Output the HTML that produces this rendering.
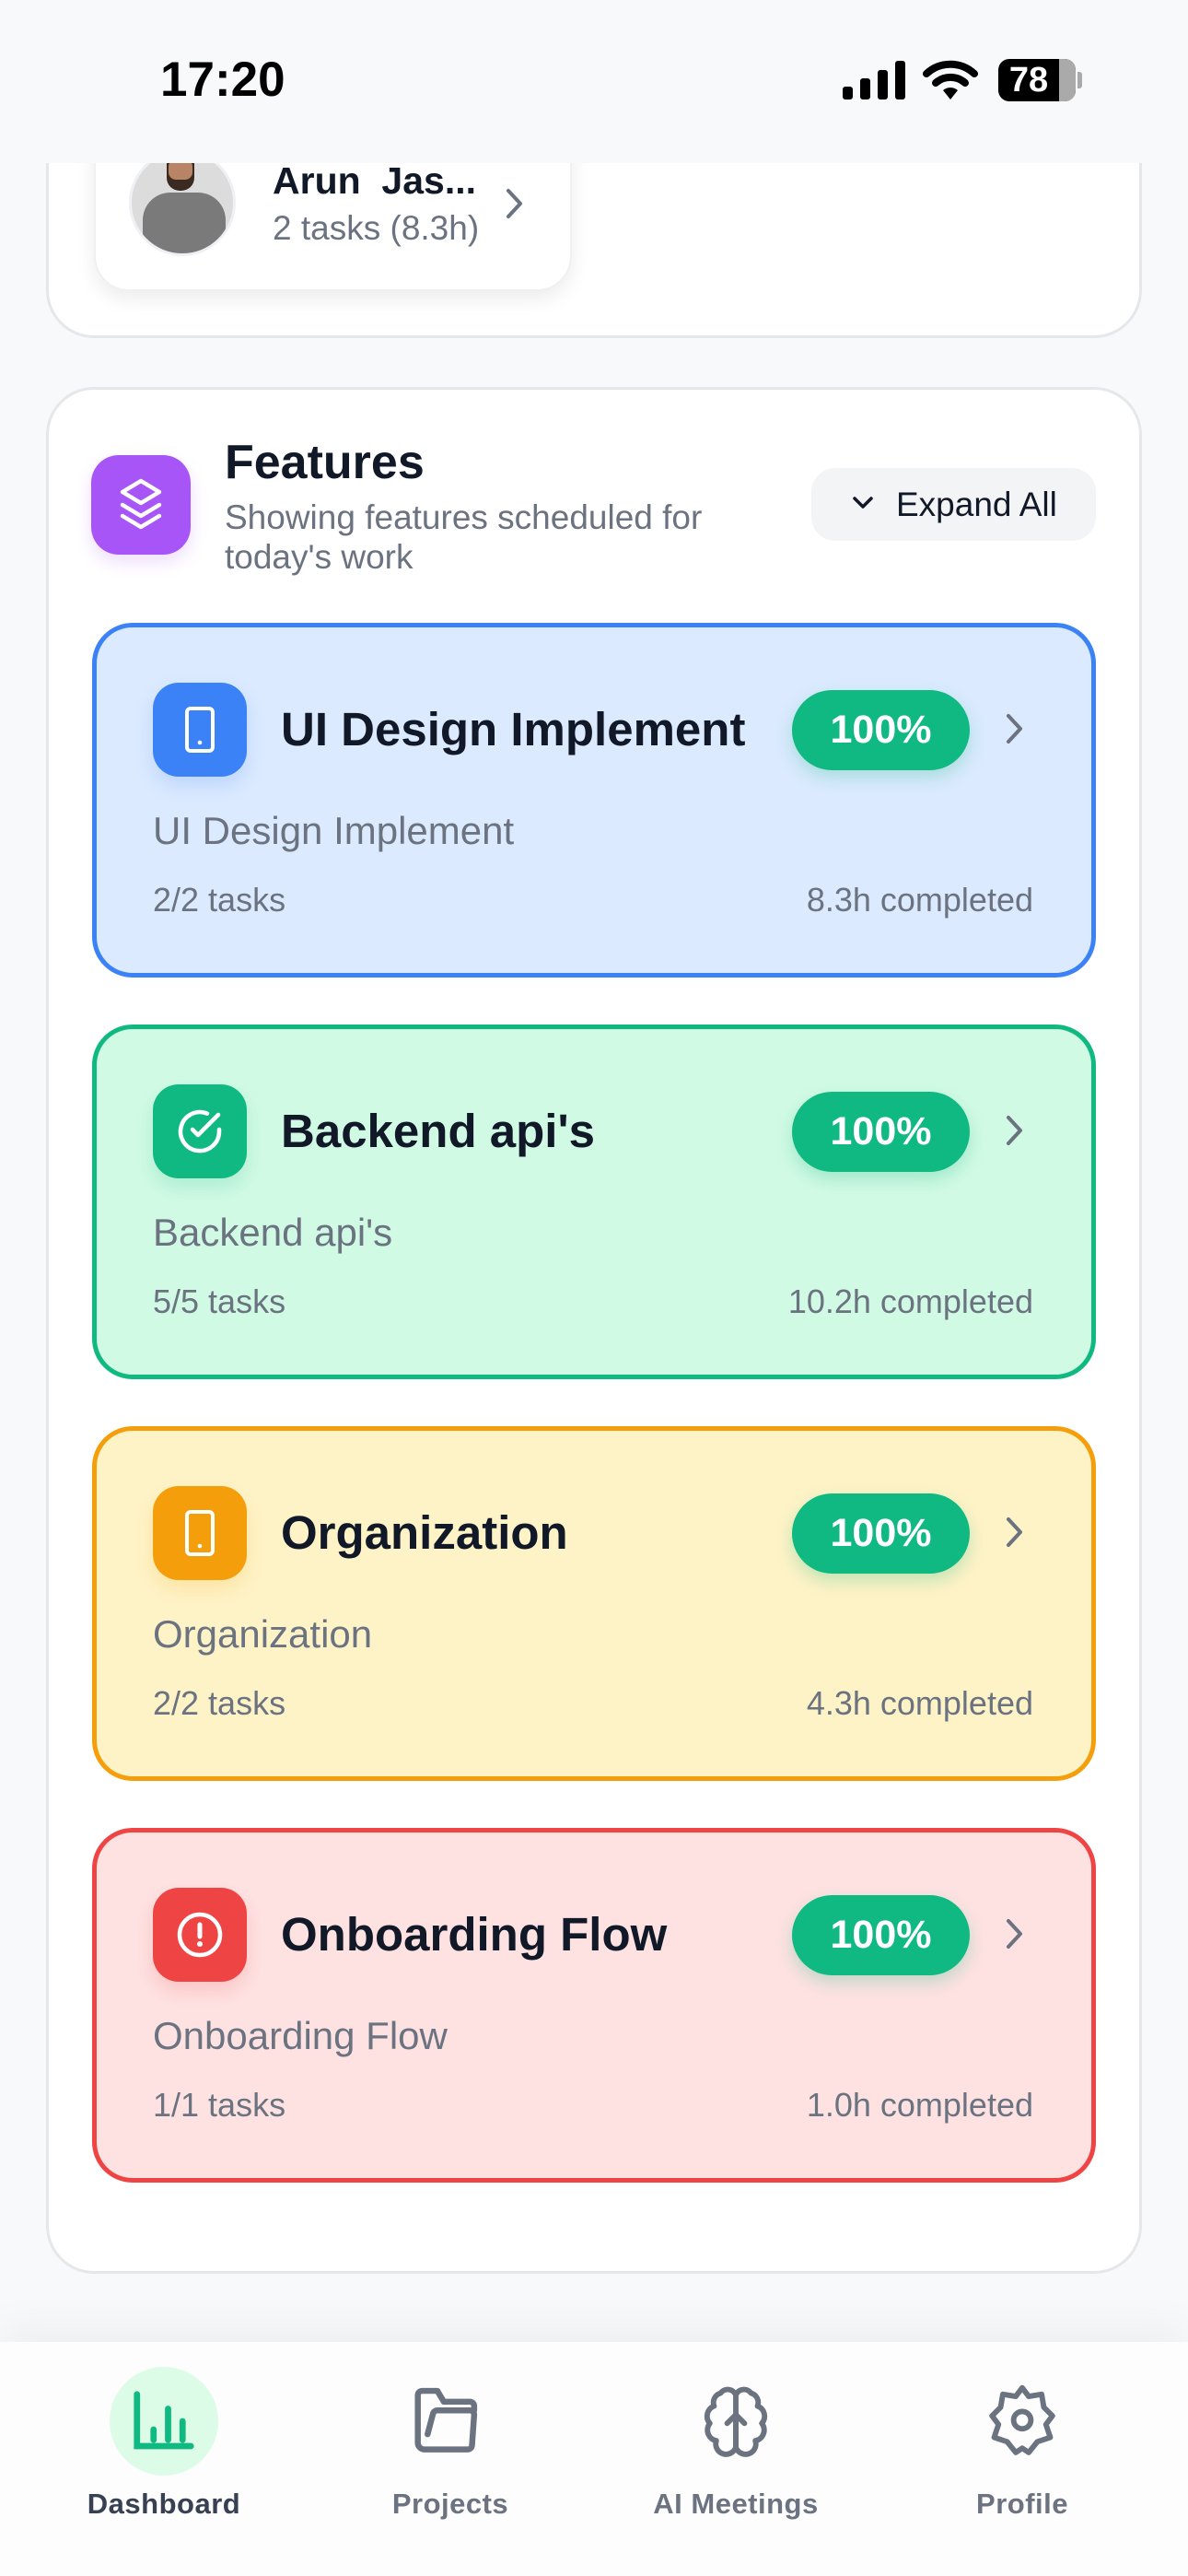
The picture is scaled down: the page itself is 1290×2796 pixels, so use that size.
<!DOCTYPE html>
<html><head><meta charset="utf-8"><style>
*{box-sizing:border-box;margin:0;padding:0}
body{width:1290px;height:2796px;background:#f8f9fb;font-family:"Liberation Sans",sans-serif;position:relative;overflow:hidden;color:#111827}
.abs{position:absolute}
.card{position:absolute;left:50px;width:1190px;background:#fff;border:3px solid #e5e7eb;border-radius:52px}
.fc{position:absolute;left:100px;width:1090px;height:385px;border:5px solid;border-radius:44px}
.fc .ic{position:absolute;left:61px;top:60px;width:102px;height:102px;border-radius:28px;display:flex;align-items:center;justify-content:center}
.fc .t{position:absolute;left:200px;top:84px;font-size:51px;font-weight:700;color:#111827;line-height:54px}
.fc .pill{position:absolute;left:755px;top:68px;width:193px;height:87px;border-radius:44px;background:#10b981;color:#fff;font-size:43px;font-weight:700;display:flex;align-items:center;justify-content:center;box-shadow:0 8px 18px rgba(16,185,129,.25)}
.fc .chev{position:absolute;left:985px;top:92px}
.fc .s{position:absolute;left:61px;top:197px;font-size:42px;color:#6b7280}
.fc .l{position:absolute;left:61px;top:275px;font-size:36px;color:#6b7280}
.fc .r{position:absolute;right:63px;top:275px;font-size:36px;color:#6b7280}
.nav{position:absolute;top:2542px;left:0;width:1290px;height:254px;background:#fdfdfe;box-shadow:0 -20px 40px rgba(0,0,0,.04)}
.ni{position:absolute;top:0;width:300px;text-align:center}
.ni .lb{position:absolute;top:158px;left:0;width:300px;font-size:31px;font-weight:600;color:#6b7280;letter-spacing:.5px}
</style></head><body>

<!-- top card -->
<div class="card" style="top:-100px;height:467px"></div>
<div class="abs" style="left:102px;top:100px;width:519px;height:216px;background:#fff;border-radius:38px;box-shadow:0 8px 22px rgba(0,0,0,.08);border:2px solid #eef0f3"></div>
<div class="abs" style="left:140px;top:162px;width:116px;height:116px;border-radius:50%;background:#dcdcdc;border:3px solid #eef0f3;overflow:hidden">
  <div class="abs" style="left:38px;top:0;width:30px;height:42px;background:#3a2a22;border-radius:12px 12px 14px 14px"></div>
  <div class="abs" style="left:40px;top:8px;width:26px;height:22px;background:#b98465;border-radius:8px"></div>
  <div class="abs" style="left:12px;top:44px;width:90px;height:80px;background:#7a7a7a;border-radius:30px 30px 0 0"></div>
</div>
<div class="abs" style="left:296px;top:173px;font-size:41px;font-weight:700;color:#111827;white-space:pre">Arun  Jas...</div>
<div class="abs" style="left:296px;top:227px;font-size:37px;color:#6b7280">2 tasks (8.3h)</div>
<svg class="abs" style="left:547px;top:203px" width="24" height="36" viewBox="0 0 24 36"><path d="M5 4 L18 18 L5 32" fill="none" stroke="#6b7280" stroke-width="4" stroke-linecap="round" stroke-linejoin="round"/></svg>

<!-- header -->
<div class="abs" style="left:0;top:0;width:1290px;height:177px;background:#f8f9fb"></div>
<div class="abs" style="left:174px;top:56px;font-size:53px;font-weight:700;color:#000">17:20</div>
<svg class="abs" style="left:915px;top:66px" width="68" height="42" viewBox="0 0 68 42"><rect x="0" y="28" width="11" height="14" rx="3"/><rect x="19" y="19" width="11" height="23" rx="3"/><rect x="38" y="10" width="11" height="32" rx="3"/><rect x="57" y="0" width="11" height="42" rx="3"/></svg>
<svg class="abs" style="left:1002px;top:64px" width="60" height="46" viewBox="0 0 60 46"><path d="M4 16 A38 38 0 0 1 56 16" fill="none" stroke="#000" stroke-width="8" stroke-linecap="round"/><path d="M14 26 A24 24 0 0 1 46 26" fill="none" stroke="#000" stroke-width="8" stroke-linecap="round"/><path d="M22 34 L30 44 L38 34 A12 12 0 0 0 22 34Z"/></svg>
<div class="abs" style="left:1084px;top:64px;width:84px;height:46px;border-radius:12px;background:#000;overflow:hidden"><div class="abs" style="left:66px;top:0;width:18px;height:46px;background:#aaa"></div><div class="abs" style="left:0;top:2px;width:66px;text-align:center;color:#fff;font-size:38px;font-weight:700">78</div></div>
<div class="abs" style="left:1170px;top:78px;width:5px;height:18px;background:#aaa;border-radius:0 3px 3px 0"></div>

<!-- features card -->
<div class="card" style="top:420px;height:2048px"></div>
<div class="abs" style="left:99px;top:494px;width:108px;height:108px;border-radius:30px;background:#a855f7;box-shadow:0 8px 18px rgba(168,85,247,.2)">
<svg class="abs" style="left:28px;top:24px" width="52" height="60" viewBox="0 0 52 60"><g fill="none" stroke="#fff" stroke-width="4.5" stroke-linejoin="round" stroke-linecap="round"><path d="M26 4 L46 16 L26 28 L6 16Z"/><path d="M6 30 L26 42 L46 30"/><path d="M6 42 L26 54 L46 42"/></g></svg></div>
<div class="abs" style="left:244px;top:472px;font-size:52px;font-weight:700;color:#111827">Features</div>
<div class="abs" style="left:244px;top:540px;font-size:37px;color:#6b7280;line-height:43px;width:640px">Showing features scheduled for<br>today's work</div>
<div class="abs" style="left:881px;top:508px;width:309px;height:79px;border-radius:26px;background:#f3f4f6"></div>
<svg class="abs" style="left:924px;top:537px" width="26" height="18" viewBox="0 0 26 18"><path d="M4 4 L13 13 L22 4" fill="none" stroke="#111827" stroke-width="3.5" stroke-linecap="round" stroke-linejoin="round"/></svg>
<div class="abs" style="left:973px;top:527px;font-size:37px;color:#111827">Expand All</div>

<div class="fc" style="top:676px;background:#dbeafe;border-color:#3b82f6">
 <div class="ic" style="background:#3b82f6;box-shadow:0 10px 20px rgba(59,130,246,.18)"><svg width="40" height="54" viewBox="0 0 40 54"><rect x="6" y="4" width="28" height="46" rx="4" fill="none" stroke="#fff" stroke-width="4"/><circle cx="20" cy="41" r="2.3" fill="#fff"/></svg></div>
 <div class="t">UI Design Implement</div><div class="pill">100%</div>
 <svg class="chev" width="24" height="36" viewBox="0 0 24 36"><path d="M5 4 L18 18 L5 32" fill="none" stroke="#6b7280" stroke-width="4" stroke-linecap="round" stroke-linejoin="round"/></svg>
 <div class="s">UI Design Implement</div><div class="l">2/2 tasks</div><div class="r">8.3h completed</div>
</div>

<div class="fc" style="top:1112px;background:#d1fae5;border-color:#10b981">
 <div class="ic" style="background:#10b981;box-shadow:0 10px 20px rgba(16,185,129,.18)"><svg width="56" height="56" viewBox="0 0 56 56"><g fill="none" stroke="#fff" stroke-width="4.5" stroke-linecap="round" stroke-linejoin="round"><path d="M49 26 V28 A21 21 0 1 1 36 8.7"/><path d="M20 26 L26 32 L48 10"/></g></svg></div>
 <div class="t">Backend api's</div><div class="pill">100%</div>
 <svg class="chev" width="24" height="36" viewBox="0 0 24 36"><path d="M5 4 L18 18 L5 32" fill="none" stroke="#6b7280" stroke-width="4" stroke-linecap="round" stroke-linejoin="round"/></svg>
 <div class="s">Backend api's</div><div class="l">5/5 tasks</div><div class="r">10.2h completed</div>
</div>

<div class="fc" style="top:1548px;background:#fef3c7;border-color:#f59e0b">
 <div class="ic" style="background:#f59e0b;box-shadow:0 10px 20px rgba(245,158,11,.18)"><svg width="40" height="54" viewBox="0 0 40 54"><rect x="6" y="4" width="28" height="46" rx="4" fill="none" stroke="#fff" stroke-width="4"/><circle cx="20" cy="41" r="2.3" fill="#fff"/></svg></div>
 <div class="t">Organization</div><div class="pill">100%</div>
 <svg class="chev" width="24" height="36" viewBox="0 0 24 36"><path d="M5 4 L18 18 L5 32" fill="none" stroke="#6b7280" stroke-width="4" stroke-linecap="round" stroke-linejoin="round"/></svg>
 <div class="s">Organization</div><div class="l">2/2 tasks</div><div class="r">4.3h completed</div>
</div>

<div class="fc" style="top:1984px;background:#fee2e2;border-color:#ef4444">
 <div class="ic" style="background:#ef4444;box-shadow:0 10px 20px rgba(239,68,68,.18)"><svg width="54" height="54" viewBox="0 0 54 54"><circle cx="27" cy="27" r="22" fill="none" stroke="#fff" stroke-width="4.5"/><path d="M27 16 V29" stroke="#fff" stroke-width="5" stroke-linecap="round"/><circle cx="27" cy="37" r="3" fill="#fff"/></svg></div>
 <div class="t">Onboarding Flow</div><div class="pill">100%</div>
 <svg class="chev" width="24" height="36" viewBox="0 0 24 36"><path d="M5 4 L18 18 L5 32" fill="none" stroke="#6b7280" stroke-width="4" stroke-linecap="round" stroke-linejoin="round"/></svg>
 <div class="s">Onboarding Flow</div><div class="l">1/1 tasks</div><div class="r">1.0h completed</div>
</div>

<!-- bottom nav -->
<div class="nav">
 <div class="ni" style="left:28px">
  <div class="abs" style="left:91px;top:27px;width:118px;height:118px;border-radius:50%;background:#dcfce7"></div>
  <svg class="abs" style="left:114px;top:50px" width="72" height="72" viewBox="0 0 64 64"><g stroke="#10b981" stroke-width="6" stroke-linecap="round" fill="none"><path d="M6 6 V56 H58"/><path d="M22 40 V50"/><path d="M36 20 V50"/><path d="M50 32 V50"/></g></svg>
  <div class="lb" style="color:#374151">Dashboard</div>
 </div>
 <div class="ni" style="left:339px">
  <svg class="abs" style="left:110px;top:46px" width="80" height="80" viewBox="0 0 68 68"><path d="M10 60 H50 A4 4 0 0 0 54 56 L56 28 A4 4 0 0 0 52 24 H22 A4 4 0 0 0 18 27 L13 46 M10 60 A6 6 0 0 1 4 54 V10 A4 4 0 0 1 8 6 H22 L28 16 H52 A4 4 0 0 1 56 20 V24" fill="none" stroke="#6b7280" stroke-width="5.5" stroke-linejoin="round" stroke-linecap="round"/></svg>
  <div class="lb">Projects</div>
 </div>
 <div class="ni" style="left:649px">
  <svg class="abs" style="left:110px;top:46px" width="80" height="80" viewBox="0 0 68 68"><g fill="none" stroke="#6b7280" stroke-width="5" stroke-linecap="round" stroke-linejoin="round"><path d="M34 10 A8 8 0 0 0 20 8 A9 9 0 0 0 14 20 A10 10 0 0 0 10 36 A10 10 0 0 0 16 52 A9 9 0 0 0 34 58 Z"/><path d="M34 10 A8 8 0 0 1 48 8 A9 9 0 0 1 54 20 A10 10 0 0 1 58 36 A10 10 0 0 1 52 52 A9 9 0 0 1 34 58"/><path d="M34 58 V28 M26 36 L34 28 L42 36"/></g></svg>
  <div class="lb">AI Meetings</div>
 </div>
 <div class="ni" style="left:960px">
  <svg class="abs" style="left:110px;top:45px" width="80" height="82" viewBox="0 0 68 70"><g fill="none" stroke="#6b7280" stroke-width="5" stroke-linejoin="round"><path d="M34 4 L40 12 L52 10 L54 22 L62 30 L56 38 L60 50 L48 54 L40 64 L34 60 L28 64 L20 54 L8 50 L12 38 L6 30 L14 22 L16 10 L28 12 Z"/><circle cx="34" cy="34" r="8"/></g></svg>
  <div class="lb">Profile</div>
 </div>
</div>
</body></html>
